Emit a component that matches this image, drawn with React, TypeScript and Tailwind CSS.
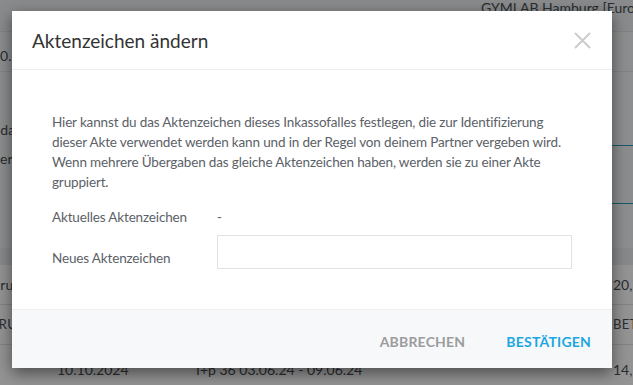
import React from 'react'

const font = { fontFamily: '"Lato", "Open Sans", sans-serif' }

function BackgroundPage() {
    return (
        <div className="w-full h-full bg-[#f3f5f7] text-[#4a4f55] text-[14px] overflow-hidden" style={font}>
            <div className="h-[32px] border-b border-[#dfe3e6] bg-[#eceff2] pl-[481px] whitespace-nowrap leading-[16px]">
                GYMLAB Hamburg [Europe/Berlin]
            </div>
            <div className="h-[40px] border-b border-[#dfe3e6] flex items-center whitespace-nowrap pt-[8px]">
                <span className="-ml-[8px]">10.10.2024 - 20.10.2024</span>
            </div>
            <div className="h-[176px] flex">
                <div className="flex flex-col whitespace-nowrap pt-[48px] gap-[9px] leading-[20px]">
                    <span className="-ml-[42px]">Stammdaten</span>
                    <span className="-ml-[33px]">Partner</span>
                </div>
                <div className="ml-auto w-[60px] mt-[73px] h-[59px] border-y border-[#2a9bb5] bg-[#f0f3f5]"></div>
            </div>
            <div className="h-[17px] bg-[#e9ecef]"></div>
            <div className="h-[40px] border-b border-[#dfe3e6] bg-white flex items-center whitespace-nowrap">
                <div className="w-[613px] shrink-0 flex">
                    <span className="-ml-[35px]">Forderung</span>
                </div>
                <span>20,70 €</span>
            </div>
            <div className="h-[40px] border-b border-[#dfe3e6] bg-white flex items-center whitespace-nowrap text-[13px] uppercase tracking-wide">
                <div className="w-[613px] shrink-0 flex">
                    <span className="-ml-[46px]">Forderung</span>
                </div>
                <span>Betrag</span>
            </div>
            <div className="h-[40px] bg-white flex items-center whitespace-nowrap pt-[9px]">
                <span className="ml-[57px] w-[139px] shrink-0">10.10.2024</span>
                <span className="w-[417px] shrink-0">I+p 36 03.06.24 - 09.06.24</span>
                <span>14,50 €</span>
            </div>
        </div>
    )
}

function CloseIcon() {
    return (
        <svg width="17" height="17" viewBox="0 0 17 17" fill="none" stroke="#cccccc" strokeWidth="2">
            <path d="M1 1 L16 16 M16 1 L1 16" />
        </svg>
    )
}

export default function App() {
    return (
        <div className="relative w-[633px] h-[385px] overflow-hidden">
            <BackgroundPage />
            <div className="absolute inset-0 bg-[rgba(0,0,0,0.42)] pl-[12px] pt-[11px]">
                <div className="w-[600px] bg-white shadow-[0_5px_15px_rgba(0,0,0,0.5)]" style={font}>
                    <div className="h-[59px] border-b border-[#eceef0] flex items-center justify-between pl-[20px] pr-[21px]">
                        <h4 className="text-[19px] text-[#333333] pt-[2px]">Aktenzeichen ändern</h4>
                        <CloseIcon />
                    </div>
                    <div className="px-[40px] pt-[42px] pb-[40px] text-[13.5px] tracking-[-0.15px] text-[#5b6167]">
                        <p className="leading-[20px]">
                            Hier kannst du das Aktenzeichen dieses Inkassofalles festlegen, die zur Identifizierung dieser Akte verwendet werden kann und in der Regel von deinem Partner vergeben wird. Wenn mehrere Übergaben das gleiche Aktenzeichen haben, werden sie zu einer Akte gruppiert.
                        </p>
                        <div className="flex items-center mt-[15px] h-[20px]">
                            <span className="w-[165px]">Aktuelles Aktenzeichen</span>
                            <span>-</span>
                        </div>
                        <div className="flex items-end mt-[8px]">
                            <span className="w-[165px] pb-[1px]">Neues Aktenzeichen</span>
                            <input type="text" className="flex-1 h-[34px] border border-[#dde3e6] outline-none px-2" />
                        </div>
                    </div>
                    <div className="h-[59px] bg-[#f7f8fa] border-t border-[#eceef0] flex items-center justify-end gap-[41px] pr-[21px] pt-[5px]">
                        <button className="text-[14px] font-bold tracking-[0.2px] text-[#9c9c9c]">ABBRECHEN</button>
                        <button className="text-[14px] font-bold tracking-[0.2px] text-[#1ca7e1]">BESTÄTIGEN</button>
                    </div>
                </div>
            </div>
        </div>
    )
}
